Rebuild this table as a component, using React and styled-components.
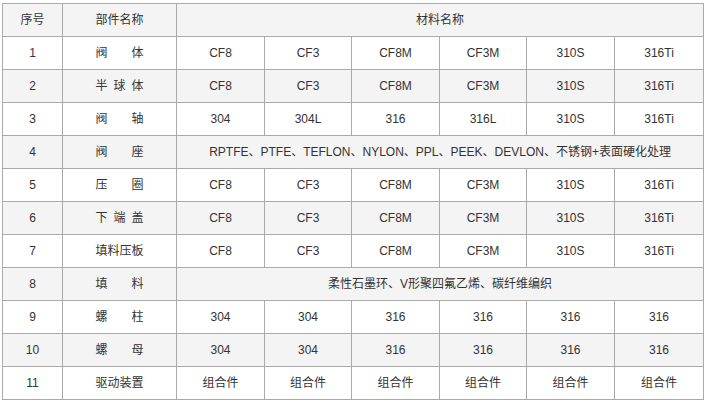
import React from 'react';
import styled, { createGlobalStyle } from 'styled-components';

const GlobalStyle = createGlobalStyle`
  body {
    margin: 0;
    background: #fff;
    font-family: "Liberation Sans", "Noto Sans CJK SC", sans-serif;
  }
`;

const Wrap = styled.div`
  padding: 3px 3px 0 2px;
`;

const Table = styled.table`
  width: 701px;
  border-collapse: collapse;
  table-layout: fixed;
  font-size: 12px;
  color: #333;
`;

const Col = styled.col`
  width: ${props => props.$w}px;
`;

const Row = styled.tr`
  height: 33px;
  background: ${props => (props.$shaded ? '#f4f4f4' : '#fff')};
`;

const Cell = styled.td`
  border: 1px solid #aaa;
  text-align: center;
  vertical-align: middle;
  padding: 0;
  white-space: pre;
  line-height: 16px;
`;

const colWidths = [60, 114, 88, 87, 88, 87, 88, 89];

const materials = [
  ['1', '阀\u3000\u3000体', ['CF8', 'CF3', 'CF8M', 'CF3M', '310S', '316Ti']],
  ['2', '半\u2002球\u2002体', ['CF8', 'CF3', 'CF8M', 'CF3M', '310S', '316Ti']],
  ['3', '阀\u3000\u3000轴', ['304', '304L', '316', '316L', '310S', '316Ti']],
  ['4', '阀\u3000\u3000座', 'RPTFE、PTFE、TEFLON、NYLON、PPL、PEEK、DEVLON、不锈钢+表面硬化处理'],
  ['5', '压\u3000\u3000圈', ['CF8', 'CF3', 'CF8M', 'CF3M', '310S', '316Ti']],
  ['6', '下\u2002端\u2002盖', ['CF8', 'CF3', 'CF8M', 'CF3M', '310S', '316Ti']],
  ['7', '填料压板', ['CF8', 'CF3', 'CF8M', 'CF3M', '310S', '316Ti']],
  ['8', '填\u3000\u3000料', '柔性石墨环、V形聚四氟乙烯、碳纤维编织'],
  ['9', '螺\u3000\u3000柱', ['304', '304', '316', '316', '316', '316']],
  ['10', '螺\u3000\u3000母', ['304', '304', '316', '316', '316', '316']],
  ['11', '驱动装置', ['组合件', '组合件', '组合件', '组合件', '组合件', '组合件']],
];

export default function App() {
  return (
    <>
      <GlobalStyle />
      <Wrap>
        <Table>
          <colgroup>
            {colWidths.map((w, i) => <Col key={i} $w={w} />)}
          </colgroup>
          <tbody>
            <Row $shaded>
              <Cell>序号</Cell>
              <Cell>部件名称</Cell>
              <Cell colSpan={6}>材料名称</Cell>
            </Row>
            {materials.map(([no, part, mats], i) => (
              <Row key={no} $shaded={i % 2 === 1}>
                <Cell>{no}</Cell>
                <Cell>{part}</Cell>
                {Array.isArray(mats)
                  ? mats.map((m, j) => <Cell key={j}>{m}</Cell>)
                  : <Cell colSpan={6}>{mats}</Cell>}
              </Row>
            ))}
          </tbody>
        </Table>
      </Wrap>
    </>
  );
}
